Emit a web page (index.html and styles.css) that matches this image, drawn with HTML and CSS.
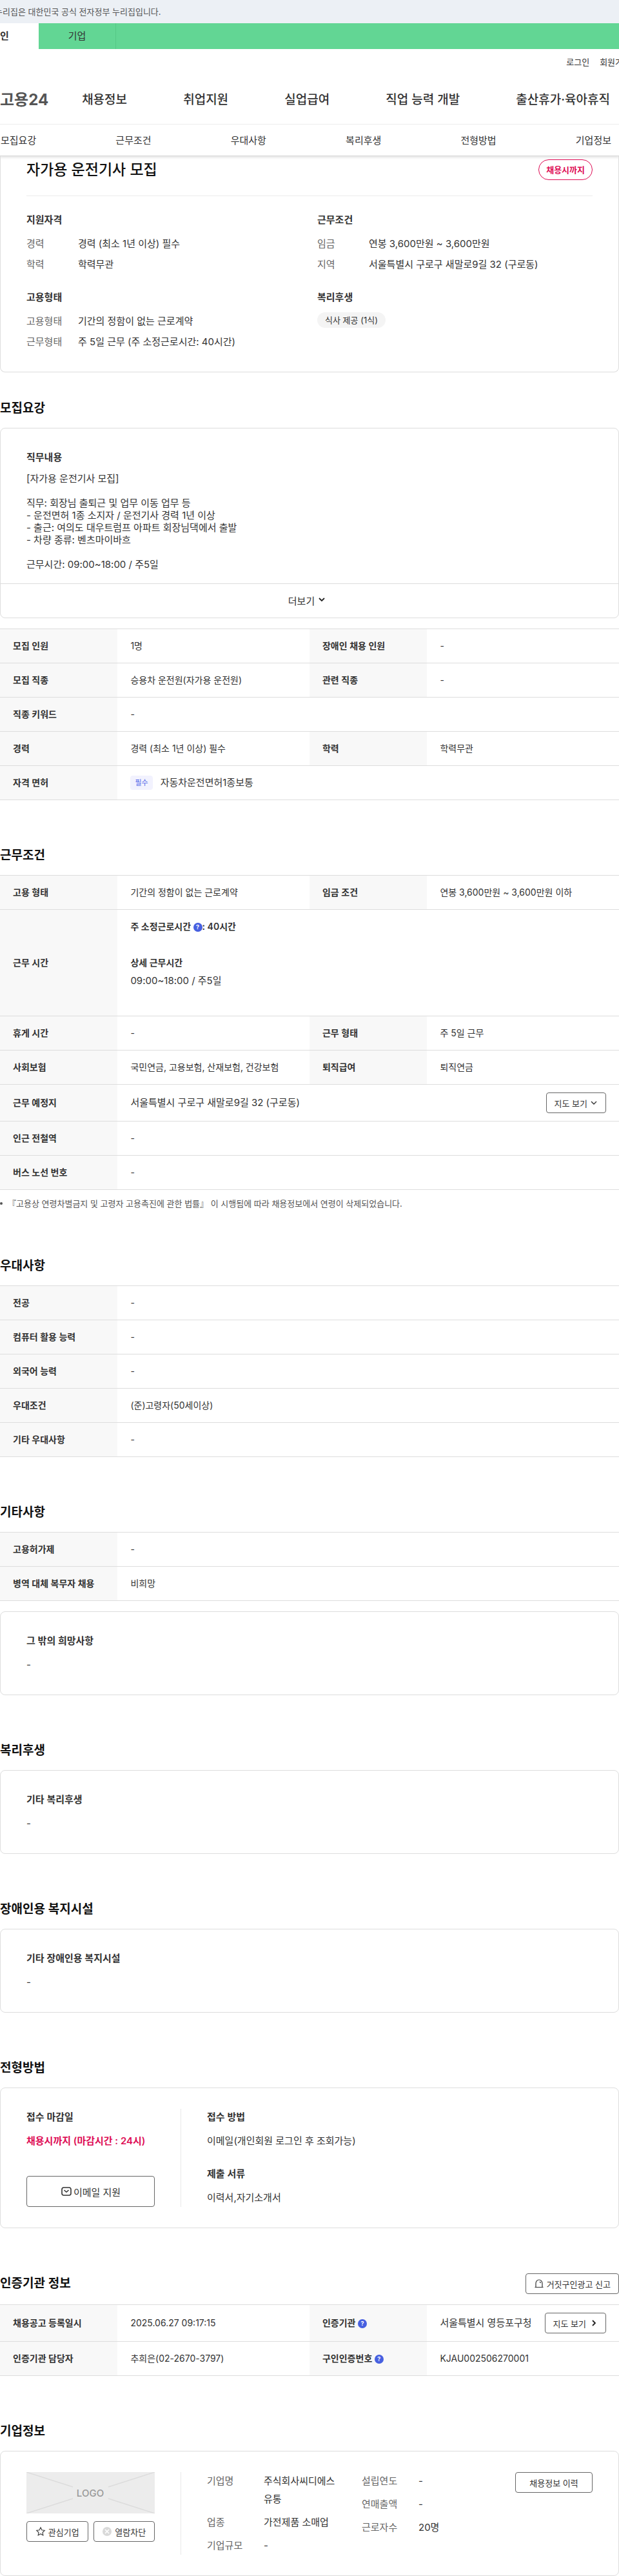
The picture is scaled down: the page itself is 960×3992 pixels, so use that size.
FILE: index.html
```html
<!DOCTYPE html>
<html lang="ko">
<head>
<meta charset="utf-8">
<meta name="viewport" content="width=device-width, initial-scale=1">
<title>자가용 운전기사 모집 - 고용24</title>
<link rel="stylesheet" href="styles.css">
</head>
<body>
<header class="site-header">
  <p class="gov-banner">누리집은 대한민국 공식 전자정부 누리집입니다.</p>
  <nav class="site-switch" aria-label="회원 구분">
    <a class="switch-link is-active" href="#">인</a>
    <a class="switch-link" href="#">기업</a>
  </nav>
  <div class="utility">
    <a href="#">로그인</a>
    <a href="#">회원가입</a>
  </div>
  <div class="main-bar">
    <a class="logo" href="#">고용24</a>
    <nav class="main-nav" aria-label="주 메뉴">
      <a href="#">채용정보</a>
      <a href="#">취업지원</a>
      <a href="#">실업급여</a>
      <a href="#">직업 능력 개발</a>
      <a href="#">출산휴가·육아휴직</a>
    </nav>
  </div>
  <nav class="section-nav" aria-label="채용공고 항목">
    <a href="#recruit">모집요강</a>
    <a href="#work">근무조건</a>
    <a href="#prefer">우대사항</a>
    <a href="#benefit">복리후생</a>
    <a href="#apply">전형방법</a>
    <a href="#company">기업정보</a>
  </nav>
</header>

<main>
  <section class="card summary">
    <div class="summary-head">
      <h1>자가용 운전기사 모집</h1>
      <span class="deadline-badge">채용시까지</span>
    </div>
    <div class="summary-grid">
      <div>
        <h3>지원자격</h3>
        <dl class="pairs">
          <dt>경력</dt><dd>경력 (최소 1년 이상) 필수</dd>
          <dt>학력</dt><dd>학력무관</dd>
        </dl>
      </div>
      <div>
        <h3>근무조건</h3>
        <dl class="pairs">
          <dt>임금</dt><dd>연봉 3,600만원 ~ 3,600만원</dd>
          <dt>지역</dt><dd>서울특별시 구로구 새말로9길 32 (구로동)</dd>
        </dl>
      </div>
      <div>
        <h3>고용형태</h3>
        <dl class="pairs">
          <dt>고용형태</dt><dd>기간의 정함이 없는 근로계약</dd>
          <dt>근무형태</dt><dd>주 5일 근무 (주 소정근로시간: 40시간)</dd>
        </dl>
      </div>
      <div>
        <h3 class="tight">복리후생</h3>
        <span class="pill">식사 제공 (1식)</span>
      </div>
    </div>
  </section>

  <section class="section section-first" id="recruit">
    <h2>모집요강</h2>
    <div class="card">
      <div class="duty">
        <h3>직무내용</h3>
        <p class="duty-text">[자가용 운전기사 모집]

직무: 회장님 출퇴근 및 업무 이동 업무 등
- 운전면허 1종 소지자 / 운전기사 경력 1년 이상
- 출근: 여의도 대우트럼프 아파트 회장님댁에서 출발
- 차량 종류: 벤츠마이바흐

근무시간: 09:00~18:00 / 주5일</p>
      </div>
      <button class="more" type="button">더보기
        <svg width="12" height="12" viewBox="0 0 12 12" aria-hidden="true"><path d="M2 3l4 4 4-4" fill="none" stroke="#222" stroke-width="1.8"/></svg>
      </button>
    </div>
    <table class="info spaced">
      <colgroup><col class="c-label"><col class="c-value"><col class="c-label"><col class="c-value"></colgroup>
      <tr><th scope="row">모집 인원</th><td>1명</td><th scope="row">장애인 채용 인원</th><td>-</td></tr>
      <tr><th scope="row">모집 직종</th><td>승용차 운전원(자가용 운전원)</td><th scope="row">관련 직종</th><td>-</td></tr>
      <tr><th scope="row">직종 키워드</th><td colspan="3">-</td></tr>
      <tr><th scope="row">경력</th><td>경력 (최소 1년 이상) 필수</td><th scope="row">학력</th><td>학력무관</td></tr>
      <tr><th scope="row">자격 면허</th><td colspan="3"><div class="license"><span class="tag">필수</span><span class="large">자동차운전면허1종보통</span></div></td></tr>
    </table>
  </section>

  <section class="section" id="work">
    <h2>근무조건</h2>
    <table class="info">
      <colgroup><col class="c-label"><col class="c-value"><col class="c-label"><col class="c-value"></colgroup>
      <tr><th scope="row">고용 형태</th><td>기간의 정함이 없는 근로계약</td><th scope="row">임금 조건</th><td>연봉 3,600만원 ~ 3,600만원 이하</td></tr>
      <tr><th scope="row">근무 시간</th><td colspan="3">
        <div class="hours">
          <p class="strong">주 소정근로시간 <button class="help" type="button" aria-label="도움말">?</button>: 40시간</p>
          <p class="strong hours-title">상세 근무시간</p>
          <p class="large">09:00~18:00 / 주5일</p>
        </div></td></tr>
      <tr><th scope="row">휴게 시간</th><td>-</td><th scope="row">근무 형태</th><td>주 5일 근무</td></tr>
      <tr><th scope="row">사회보험</th><td>국민연금, 고용보험, 산재보험, 건강보험</td><th scope="row">퇴직급여</th><td>퇴직연금</td></tr>
      <tr><th scope="row">근무 예정지</th><td colspan="3"><div class="place"><span class="large">서울특별시 구로구 새말로9길 32 (구로동)</span>
        <button class="btn" type="button">지도 보기<svg width="12" height="12" viewBox="0 0 12 12" aria-hidden="true"><path d="M2 4l4 4 4-4" fill="none" stroke="#333" stroke-width="1.4"/></svg></button></div></td></tr>
      <tr><th scope="row">인근 전철역</th><td colspan="3">-</td></tr>
      <tr><th scope="row">버스 노선 번호</th><td colspan="3">-</td></tr>
    </table>
    <p class="note">『고용상 연령차별금지 및 고령자 고용촉진에 관한 법률』 이 시행됨에 따라 채용정보에서 연령이 삭제되었습니다.</p>
  </section>

  <section class="section" id="prefer">
    <h2>우대사항</h2>
    <table class="info">
      <colgroup><col class="c-label"><col></colgroup>
      <tr><th scope="row">전공</th><td>-</td></tr>
      <tr><th scope="row">컴퓨터 활용 능력</th><td>-</td></tr>
      <tr><th scope="row">외국어 능력</th><td>-</td></tr>
      <tr><th scope="row">우대조건</th><td>(준)고령자(50세이상)</td></tr>
      <tr><th scope="row">기타 우대사항</th><td>-</td></tr>
    </table>
  </section>

  <section class="section">
    <h2>기타사항</h2>
    <table class="info">
      <colgroup><col class="c-label"><col></colgroup>
      <tr><th scope="row">고용허가제</th><td>-</td></tr>
      <tr><th scope="row">병역 대체 복무자 채용</th><td>비희망</td></tr>
    </table>
    <div class="card padded spaced">
      <h3>그 밖의 희망사항</h3>
      <p class="text">-</p>
    </div>
  </section>

  <section class="section" id="benefit">
    <h2>복리후생</h2>
    <div class="card padded">
      <h3>기타 복리후생</h3>
      <p class="text">-</p>
    </div>
  </section>

  <section class="section">
    <h2>장애인용 복지시설</h2>
    <div class="card padded">
      <h3>기타 장애인용 복지시설</h3>
      <p class="text">-</p>
    </div>
  </section>

  <section class="section" id="apply">
    <h2>전형방법</h2>
    <div class="card padded split">
      <div class="side apply-side">
        <div>
          <h3>접수 마감일</h3>
          <p class="text deadline">채용시까지 (마감시간 : 24시)</p>
        </div>
        <button class="btn btn-large" type="button"><svg width="18" height="16" viewBox="0 0 18 16" aria-hidden="true"><rect x="2" y="2" width="14" height="12" rx="3" fill="none" stroke="#333" stroke-width="1.6"/><path d="M5.500 6l3.500 3 3.500-3" fill="none" stroke="#333" stroke-width="1.6"/></svg>이메일 지원</button>
      </div>
      <div class="body apply-body">
        <div>
          <h3>접수 방법</h3>
          <p class="text">이메일(개인회원 로그인 후 조회가능)</p>
        </div>
        <div>
          <h3>제출 서류</h3>
          <p class="text">이력서,자기소개서</p>
        </div>
      </div>
    </div>
  </section>

  <section class="section">
    <div class="section-head">
      <h2>인증기관 정보</h2>
      <button class="btn" type="button"><svg width="16" height="16" viewBox="0 0 16 16" aria-hidden="true"><path d="M3 13V7.500a5 5.500 0 0 1 10 0V13M1.500 13.500h13M9 5l1.800 1.800" fill="none" stroke="#333" stroke-width="1.2"/></svg>거짓구인광고 신고</button>
    </div>
    <table class="info">
      <colgroup><col class="c-label"><col class="c-value"><col class="c-label"><col class="c-value"></colgroup>
      <tr><th scope="row">채용공고 등록일시</th><td>2025.06.27 09:17:15</td><th scope="row">인증기관 <button class="help" type="button" aria-label="도움말">?</button></th>
        <td><div class="place"><span class="large">서울특별시 영등포구청</span><button class="btn btn-map" type="button">지도 보기<svg width="12" height="12" viewBox="0 0 12 12" aria-hidden="true"><path d="M4 2l4 4-4 4" fill="none" stroke="#222" stroke-width="1.8"/></svg></button></div></td></tr>
      <tr><th scope="row">인증기관 담당자</th><td>추희은(02-2670-3797)</td><th scope="row">구인인증번호 <button class="help" type="button" aria-label="도움말">?</button></th><td>KJAU002506270001</td></tr>
    </table>
  </section>

  <section class="section" id="company">
    <h2>기업정보</h2>
    <div class="card padded split">
      <div class="side">
        <svg class="company-logo" viewBox="0 0 199 64" role="img" aria-label="LOGO">
          <rect width="199" height="64" fill="#ececec"/>
          <path d="M0 0l72 23M199 0l-72 23M0 64l72-23M199 64l-72-23" stroke="#dcdcdc" stroke-width="1.5"/>
          <text class="logo-text" x="99" y="38" text-anchor="middle">LOGO</text>
        </svg>
        <div class="company-actions">
          <button class="btn" type="button"><svg width="16" height="16" viewBox="0 0 16 16" aria-hidden="true"><path d="M8 1.800l1.900 4 4.300.6-3.100 3.100.7 4.400L8 11.800l-3.800 2.100.7-4.400L1.800 6.400l4.300-.6z" fill="none" stroke="#444" stroke-width="1.200"/></svg>관심기업</button>
          <button class="btn" type="button"><svg width="16" height="16" viewBox="0 0 16 16" aria-hidden="true"><circle cx="8" cy="8" r="7" fill="#d9d9d9"/><path d="M5 5l6 6M11 5l-6 6" stroke="#fff" stroke-width="1.5"/></svg>열람차단</button>
        </div>
      </div>
      <div class="body company-body">
        <dl class="facts">
          <dt>기업명</dt><dd>주식회사씨디에스유통</dd>
          <dt>업종</dt><dd>가전제품 소매업</dd>
          <dt>기업규모</dt><dd>-</dd>
        </dl>
        <dl class="facts">
          <dt>설립연도</dt><dd>-</dd>
          <dt>연매출액</dt><dd>-</dd>
          <dt>근로자수</dt><dd>20명</dd>
        </dl>
        <button class="btn btn-history" type="button">채용정보 이력</button>
      </div>
    </div>
  </section>
</main>
</body>
</html>
```
FILE: styles.css
```css
* {
  box-sizing: border-box;
}

body,
h1,
h2,
h3,
p,
dl,
dd {
  margin: 0;
}

body {
  background: #fff;
  color: #333;
  font-family: "Inter", "Noto Sans CJK KR", sans-serif;
  font-size: 15px;
  line-height: 24px;
  overflow-x: hidden;
}

a {
  color: inherit;
  text-decoration: none;
}

button {
  font-family: inherit;
  color: #333;
  cursor: pointer;
}

/* Header */
.site-header {
  border-bottom: 1px solid #d8d8d8;
  box-shadow: 0 2px 4px rgba(0, 0, 0, 0.12);
  overflow-x: clip;
}

.gov-banner {
  background: #ecf0f5;
  color: #555;
  font-size: 13px;
  line-height: 36px;
  text-indent: -8px;
}

.site-switch {
  display: flex;
  height: 40px;
  background: #62d694;
}

.switch-link {
  width: 120px;
  border-right: 1px solid #55c886;
  line-height: 40px;
  text-align: center;
}

.switch-link.is-active {
  width: 60px;
  border-right: 0;
  background: #fff;
  font-weight: 700;
  text-align: left;
}

.utility {
  display: flex;
  justify-content: flex-end;
  gap: 16px;
  margin: 10px -18px 8px 0;
  font-size: 13px;
  line-height: 20px;
  white-space: nowrap;
}

.main-bar {
  display: flex;
  align-items: center;
  gap: 52px;
  height: 79px;
  padding-top: 4px;
  border-bottom: 1px solid #ececec;
}

.logo {
  color: #555;
  font-size: 24px;
  font-weight: 700;
}

.main-nav {
  display: flex;
  flex: 1;
  justify-content: space-between;
  padding-right: 14px;
  font-size: 19px;
  font-weight: 500;
  white-space: nowrap;
}

.section-nav {
  display: flex;
  justify-content: space-between;
  padding: 1px 12px 0 1px;
  line-height: 47px;
}

/* Cards and headings */
.card {
  border: 1px solid #ddd;
  border-radius: 8px;
}

.padded {
  padding: 32px 40px;
}

.spaced {
  margin-top: 16px;
}

.section {
  margin-top: 70px;
}

.section-first {
  margin-top: 40px;
}

h2 {
  margin-bottom: 14px;
  color: #111;
  font-size: 19px;
  font-weight: 600;
  line-height: 32px;
}

h3 {
  font-size: 15px;
  font-weight: 600;
  line-height: 26px;
}

.section-head {
  display: flex;
  align-items: center;
  justify-content: space-between;
  margin-bottom: 16px;
}

.section-head h2 {
  margin-bottom: 0;
}

.text {
  margin-top: 10px;
  line-height: 28px;
}

.large {
  font-size: 15px;
}

/* Summary */
.summary {
  padding: 5px 40px 34px;
  border-top: 0;
  border-radius: 0 0 8px 8px;
}

.summary-head {
  display: flex;
  align-items: center;
  justify-content: space-between;
  padding-bottom: 24px;
  border-bottom: 1px solid #ececec;
}

h1 {
  color: #111;
  font-size: 23px;
  font-weight: 500;
  line-height: 32px;
}

.deadline-badge {
  padding: 0 11px;
  border: 1px solid #de0d55;
  border-radius: 16px;
  color: #de0d55;
  font-size: 13px;
  font-weight: 700;
  line-height: 30px;
}

.summary-grid {
  display: grid;
  grid-template-columns: 451fr 427fr;
  row-gap: 26px;
  margin-top: 24px;
}

.summary-grid h3 {
  margin-bottom: 12px;
  font-weight: 700;
}

.summary-grid h3.tight {
  margin-bottom: 10px;
}

.pairs {
  display: grid;
  grid-template-columns: 80px 1fr;
  row-gap: 8px;
}

dt {
  color: #666;
}

.pill {
  display: inline-block;
  padding: 0 12px;
  border-radius: 12px;
  background: #f4f4f4;
  font-size: 13px;
}

/* Duty card */
.duty {
  padding: 32px 40px 20px;
}

.duty-text {
  margin-top: 10px;
  line-height: 19px;
  white-space: pre-line;
}

.more {
  display: flex;
  align-items: center;
  justify-content: center;
  gap: 5px;
  width: 100%;
  height: 53px;
  padding: 0 8px 2px 0;
  border: 0;
  border-top: 1px solid #ddd;
  background: none;
  font-size: 15px;
}

/* Info tables */
.info {
  width: 100%;
  border-collapse: separate;
  border-spacing: 0;
  border-top: 1px solid #ddd;
  table-layout: fixed;
  font-size: 14px;
}

.c-label {
  width: 19%;
}

.c-value {
  width: 31%;
}

.info th,
.info td {
  height: 53px;
  padding: 12px 20px;
  border-bottom: 1px solid #ddd;
  text-align: left;
}

.info th {
  background: #f8f8f8;
  font-weight: 600;
  white-space: nowrap;
}

.license {
  display: flex;
  align-items: center;
  gap: 12px;
}

.tag {
  padding: 0 7px;
  border-radius: 4px;
  background: #f2f2fe;
  color: #5064e8;
  font-size: 11px;
  line-height: 22px;
}

.strong {
  font-weight: 600;
}

.hours {
  padding: 2px 0 30px;
}

.hours-title {
  margin-top: 32px;
  margin-bottom: 4px;
}

.help {
  width: 14px;
  height: 14px;
  padding: 0;
  border: 0;
  border-radius: 50%;
  background: #4760e0;
  color: #fff;
  font-size: 9px;
  font-weight: 700;
  line-height: 14px;
  vertical-align: 1px;
}

.place {
  display: flex;
  align-items: center;
  justify-content: space-between;
  white-space: nowrap;
}

.note {
  display: flex;
  align-items: center;
  gap: 8px;
  margin-top: 10px;
  color: #555;
  font-size: 13px;
  line-height: 22px;
}

.note::before {
  width: 4px;
  height: 4px;
  border-radius: 50%;
  background: #555;
  content: "";
}

/* Buttons */
.btn {
  display: flex;
  align-items: center;
  justify-content: center;
  gap: 4px;
  height: 32px;
  padding: 0 12px;
  border: 1px solid #666;
  border-radius: 4px;
  background: #fff;
  font-size: 13px;
  white-space: nowrap;
}

.btn-map {
  gap: 6px;
}

.btn-large {
  width: 100%;
  height: 48px;
  gap: 2px;
  font-size: 15px;
}

/* Two-part cards */
.split {
  display: flex;
}

.side {
  flex: 0 0 240px;
  padding-right: 40px;
  border-right: 1px solid #e8e8e8;
}

.body {
  flex: 1;
  padding-left: 40px;
}

.apply-side {
  display: flex;
  flex-direction: column;
  justify-content: space-between;
}

.apply-body {
  display: grid;
  gap: 24px;
}

.deadline {
  color: #de0d55;
  font-weight: 600;
  white-space: nowrap;
}

.company-logo {
  display: block;
  width: 100%;
}

.logo-text {
  fill: #999;
  font-family: "Inter", sans-serif;
  font-size: 15px;
  font-weight: 500;
}

.company-actions {
  display: grid;
  grid-template-columns: 1fr 1fr;
  gap: 8px;
  margin-top: 12px;
}

.company-actions .btn {
  padding: 0 4px;
}

.company-body {
  display: grid;
  grid-template-columns: 200px 1fr 120px;
  column-gap: 40px;
}

.facts {
  display: grid;
  grid-template-columns: 88px 1fr;
  row-gap: 8px;
  align-content: start;
  line-height: 28px;
}
```
